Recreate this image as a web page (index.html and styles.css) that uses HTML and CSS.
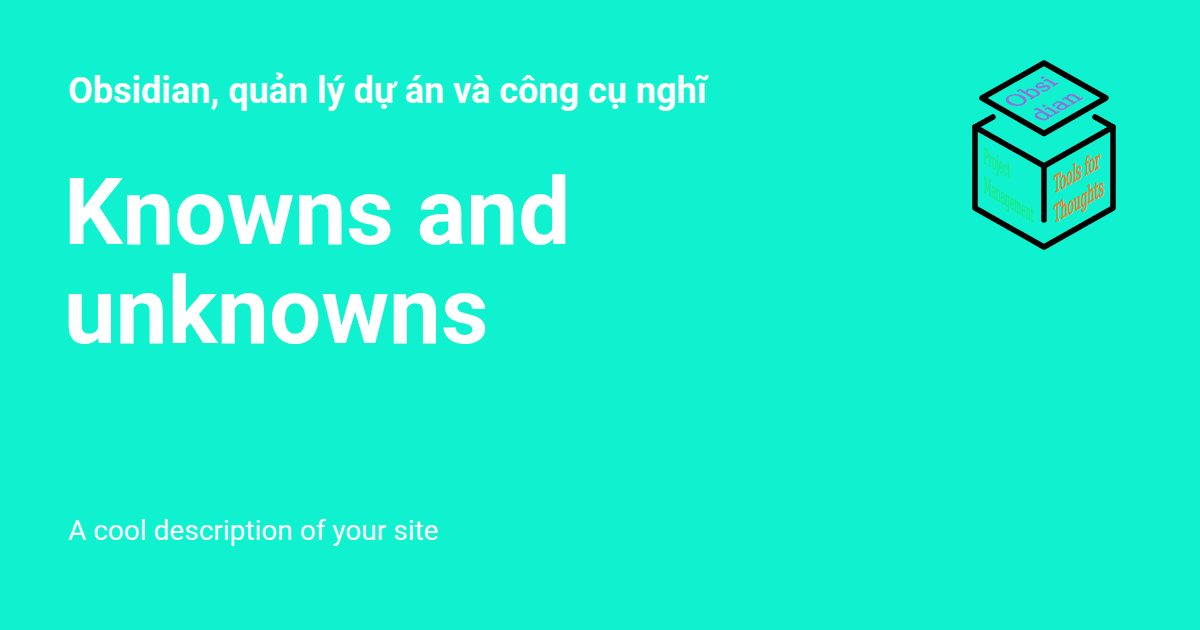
FILE: index.html
```html
<!DOCTYPE html>
<html lang="vi">
<head>
<meta charset="utf-8">
<title>Knowns and unknowns</title>
<link rel="stylesheet" href="styles.css">
</head>
<body>
<main class="card">
  <div class="content">
    <p class="eyebrow">Obsidian, quản lý dự án và công cụ nghĩ</p>
    <h1 class="title">Knowns and unknowns</h1>
    <p class="desc">A cool description of your site</p>
  </div>
  <svg class="logo" width="150" height="200" viewBox="970 55 150 200" aria-label="Logo">
    <g class="lines">
      <path d="M1044 63 L1106 98 L1044 133.5 L982 98 Z"/>
      <path d="M993 117 L975 127 L1044 166 L1113 127 L1095 117"/>
      <path d="M975 127 V208 L1044 247 L1113 208 V127"/>
      <path d="M1044 166 V220"/>
    </g>
    <text class="t-top" transform="matrix(0.866 -0.5 0.866 0.5 1015.5 108.5)">Obsi</text>
    <text class="t-top" transform="matrix(0.866 -0.5 0.866 0.5 1042 122)">dian</text>
    <text class="t-left" transform="matrix(0.335 0.2 0 1 984 163)">Project</text>
    <text class="t-left" transform="matrix(0.34 0.21 0 1 984 192)">Management</text>
    <text class="t-right" transform="matrix(0.44 -0.25 0 1 1054 193.5)">Tools for</text>
    <text class="t-right" transform="matrix(0.44 -0.25 0 1 1054 223)">Thoughts</text>
  </svg>
</main>
</body>
</html>
```
FILE: styles.css
```css
html, body {
  margin: 0;
  padding: 0;
}
.card {
  width: 1200px;
  height: 630px;
  box-sizing: border-box;
  background: #10f2cf;
  color: #fff;
  font-family: Roboto, sans-serif;
  display: flex;
  justify-content: space-between;
  align-items: flex-start;
  padding: 55px 80px 0 68px;
}
.content {
  width: 680px;
  height: 496px;
  display: flex;
  flex-direction: column;
}
.eyebrow {
  margin: 14px 0 0;
  font-size: 36px;
  line-height: 44px;
  font-weight: 700;
  white-space: nowrap;
}
.title {
  margin: 50px 0 0 -4px;
  font-size: 92.5px;
  line-height: 99.4px;
  font-weight: 700;
}
.desc {
  margin: auto 0 0;
  font-size: 28px;
  line-height: 40px;
  font-weight: 400;
}
.logo {
  flex: none;
}
.lines path {
  fill: none;
  stroke: #000;
  stroke-width: 5.5;
  stroke-linecap: round;
  stroke-linejoin: round;
}
.t-top, .t-left, .t-right {
  font-family: "DejaVu Serif", serif;
  text-rendering: geometricPrecision;
}
.t-top {
  fill: #9370db;
  stroke: #9370db;
  stroke-width: 0.5;
  font-size: 22px;
}
.t-left {
  fill: #20e880;
  stroke: #20e880;
  stroke-width: 0.4;
  font-size: 22px;
}
.t-right {
  fill: #f58025;
  stroke: #f58025;
  stroke-width: 0.8;
  font-size: 24px;
}
```
